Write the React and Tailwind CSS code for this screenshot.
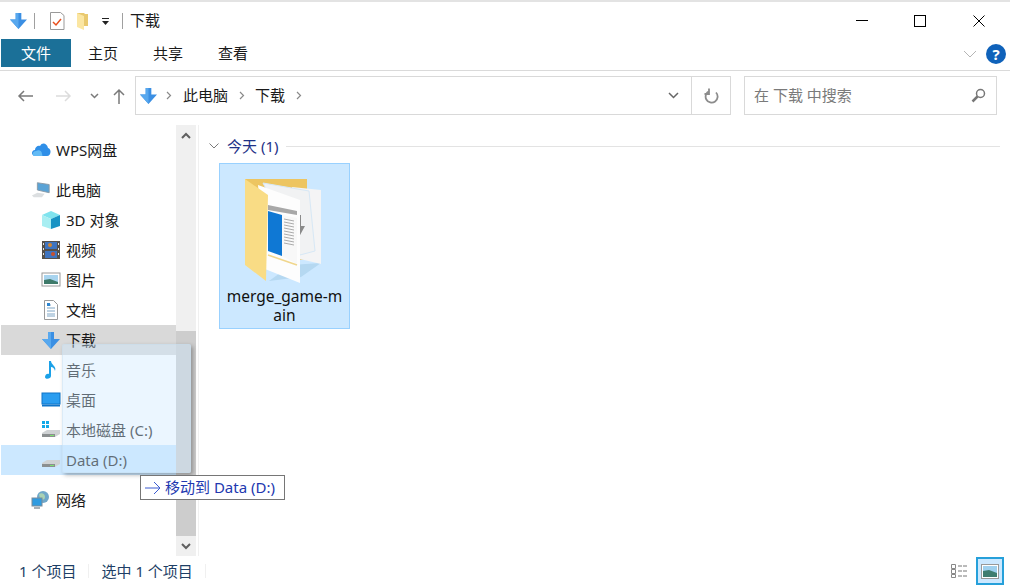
import React from 'react';

const font = "font-['Segoe_UI','Noto_Sans','Noto_Sans_CJK_SC',sans-serif]";

const DownArrow = ({ size = 18 }) => (
  <svg width={size} height={size} viewBox="0 0 18 18">
    <path d="M6 1h6v7h6l-9 10-9-10h6z" fill="#3b8fe3" />
    <path d="M6 1h3v17L0 8h6z" fill="#58a8ee" />
  </svg>
);

const TinyFolder = () => (
  <svg width="13" height="18" viewBox="0 0 13 18">
    <path d="M1 1h7l1 1h3v12H1z" fill="#e9c96f" />
    <path d="M1 1l7 3v14l-7-3z" fill="#fbe6a2" />
  </svg>
);

const Cloud = () => (
  <svg width="20" height="16" viewBox="0 0 20 16">
    <path d="M4 14c-4 0-4-6 0-6 0-3 3-5 5-4 2-4 7-3 8 2 4 1 3 8-1 8z" fill="#2f8fe8" />
    <path d="M3 14c-2-2-1-5 2-5 3-2 6 0 6 3 1 2 0 2 0 2z" fill="#63bbf5" />
  </svg>
);

const Computer = () => (
  <svg width="22" height="18" viewBox="0 0 22 18">
    <path d="M7 1l13 2v9L7 9z" fill="#5aa3d6" stroke="#8a98a4" />
    <path d="M1 15l6-3 8 1-3 4H3z" fill="#dcdfe1" />
  </svg>
);

const Cube = () => (
  <svg width="20" height="20" viewBox="0 0 20 20">
    <path d="M10 1l9 4-9 4-9-4z" fill="#7fe3ee" />
    <path d="M1 5l9 4v10l-9-3z" fill="#a8eef2" />
    <path d="M19 5l-9 4v10l9-3z" fill="#1793c4" />
  </svg>
);

const Film = () => (
  <svg width="20" height="20" viewBox="0 0 20 20">
    <rect x="1" y="1" width="18" height="18" fill="#55504a" />
    <rect x="4" y="2" width="12" height="7" fill="#3f74bf" />
    <rect x="4" y="11" width="12" height="7" fill="#3f74bf" />
    <circle cx="9" cy="5" r="2" fill="#d5862f" />
    <circle cx="12" cy="14" r="2" fill="#c8502e" />
    <path d="M2 3h1v2H2zM2 8h1v2H2zM2 13h1v2H2zM17 3h1v2h-1zM17 8h1v2h-1zM17 13h1v2h-1z" fill="#e4e4e4" />
  </svg>
);

const Picture = () => (
  <svg width="20" height="16" viewBox="0 0 20 16">
    <rect x="1" y="1" width="18" height="13" fill="#fff" stroke="#9a9a9a" />
    <rect x="3" y="3" width="14" height="9" fill="#a8d4ef" />
    <path d="M3 8l6-1 8 3v2H3z" fill="#3e7a6a" />
  </svg>
);

const Doc = () => (
  <svg width="16" height="20" viewBox="0 0 16 20">
    <path d="M1.500 .5h9l4 4v15h-13z" fill="#fff" stroke="#9a9a9a" />
    <path d="M4 5h4M4 8h8M4 11h8M4 14h8M4 16h8" stroke="#7ea6c6" />
    <path d="M4 3h3v3H4z" fill="#2e86d0" />
  </svg>
);

const Note = () => (
  <svg width="14" height="20" viewBox="0 0 14 20">
    <path d="M5 1h2c0 4 6 5 4 10-1-3-2-4-4-4v9c0 3-6 4-6 1s3-4 4-3z" fill="#1ba1e8" />
  </svg>
);

const Desktop = () => (
  <svg width="20" height="16" viewBox="0 0 20 16">
    <rect x="1" y="1" width="18" height="11" fill="#2a9df0" stroke="#0f74c8" />
    <path d="M1 13.500h18" stroke="#0f74c8" strokeWidth="2" />
  </svg>
);

const Drive = ({ windows }) => (
  <svg width="20" height="20" viewBox="0 0 20 20">
    {windows && <path d="M1 1h3v3H1zM5 1h3v3H5zM1 5h3v3H1zM5 5h3v3H5z" fill="#12a9e8" />}
    <path d="M1 13l5-3h13v4l-5 3H1z" fill="#cfd2d4" />
    <path d="M1 14h13v3H1z" fill="#8b8f90" />
    <rect x="9" y="15" width="4" height="1" fill="#7de070" />
  </svg>
);

const Network = () => (
  <svg width="20" height="20" viewBox="0 0 20 20">
    <circle cx="12" cy="7" r="6" fill="#6fa7c9" />
    <path d="M8 4c3-2 6 0 6 3s-3 3-5 2z" fill="#a9d2b4" />
    <rect x="1" y="8" width="10" height="8" fill="#2f9be0" stroke="#7d8c99" />
    <path d="M3 18h6" stroke="#a8b0b6" strokeWidth="2" />
  </svg>
);

const NavRow = ({ icon, label, indent, bg }) => (
  <div className={`flex items-center h-[30px] ml-px ${bg || ''}`}>
    <div className={`flex justify-center items-center w-5 h-5 ${indent ? 'ml-[40px] mr-[5px]' : 'ml-[30px] mr-[5px]'}`}>{icon}</div>
    <span className="text-[15px] text-[#1a1a1a] whitespace-nowrap">{label}</span>
  </div>
);

const BigFolder = () => (
  <svg width="76" height="104" viewBox="0 0 76 104">
    <path d="M0 0h62v80L0 86z" fill="#edc561" />
    <path d="M24 102l32-4 20-14-30 2z" fill="#a5cde8" opacity=".6" />
    <path d="M47 8l29 3v74l-21-5z" fill="#f4f4f5" />
    <path d="M18 4l46 8 6 60-15 4z" fill="#f1f2f3" stroke="#d7e8f6" />
    <path d="M50 36h6v11h4l-6 11-5-11h2z" fill="#8a8a8a" />
    <path d="M13 6l42 15v83l-35-14z" fill="#fdfdfd" />
    <path d="M23 26l29 6v4l-29-5z" fill="#a8a8a8" />
    <path d="M23 32l14 4v41l-14-5z" fill="#0f78d4" />
    <path d="M37 36l15 3v46l-15-8z" fill="#f8f8f8" />
    <path d="M39 40l10 2M39 43l10 2M39 46l10 2M39 49l10 2M39 52l10 2M39 55l10 2M39 58l10 2M39 61l10 2M39 64l10 2" stroke="#8a8a8a" strokeWidth=".7" />
    <path d="M23 76l29 10" stroke="#f0d68c" strokeWidth="1.500" />
    <path d="M0 0l23 16-2 86L0 86z" fill="#f9dc85" />
  </svg>
);

const App = () => {
  return (
    <div className={`relative w-[1010px] h-[586px] overflow-hidden bg-white flex flex-col border-t-2 border-[#e3e3e3] ${font}`}>
      {/* title bar */}
      <div className="h-[37px] flex items-center shrink-0">
        <div className="ml-[10px]"><DownArrow size={17} /></div>
        <div className="w-px h-[16px] bg-[#a0a0a0] ml-[7px]" />
        <svg className="ml-[15px]" width="15" height="18" viewBox="0 0 15 18">
          <path d="M.5 .5h10l3.500 3v14H.5z" fill="#fff" stroke="#999" />
          <path d="M3 10l3 3 5-6" stroke="#e8501e" strokeWidth="1.500" fill="none" />
        </svg>
        <div className="ml-[11px]"><TinyFolder /></div>
        <svg className="ml-[13px] mt-[3px]" width="8" height="8" viewBox="0 0 8 8">
          <path d="M0 3h7l-3.500 4z" fill="#222" />
          <path d="M0 .5h7" stroke="#222" />
        </svg>
        <div className="w-px h-[16px] bg-[#a0a0a0] ml-[12px]" />
        <span className="ml-[7px] text-[15px] text-[#1a1a1a]">下载</span>
        <div className="ml-auto mr-px flex items-center">
          <div className="w-[58px] flex justify-center"><div className="w-3 h-px bg-black" /></div>
          <div className="w-[58px] flex justify-center"><div className="w-3 h-3 border border-black" /></div>
          <div className="w-[60px] flex justify-center">
            <svg width="12" height="12" viewBox="0 0 12 12"><path d="M.5 .5l11 11M11.500 .5l-11 11" stroke="#000" /></svg>
          </div>
        </div>
      </div>
      {/* ribbon tabs */}
      <div className="h-[32px] shrink-0 flex items-stretch border-b border-[#dadada] pl-px">
        <div className="w-[70px] h-[28px] bg-[#1b7098] text-white text-[15px] flex items-center justify-center">文件</div>
        <div className="w-[64px] flex items-center justify-center text-[15px] text-[#1a1a1a] h-[28px]">主页</div>
        <div className="w-[66px] flex items-center justify-center text-[15px] text-[#1a1a1a] h-[28px]">共享</div>
        <div className="w-[64px] flex items-center justify-center text-[15px] text-[#1a1a1a] h-[28px]">查看</div>
        <div className="ml-auto flex items-center mb-px mr-[4px]">
          <svg width="14" height="8" viewBox="0 0 14 8"><path d="M1 1l6 6 6-6" stroke="#b5b5b5" fill="none" /></svg>
          <div className="ml-[9px] w-5 h-5 rounded-full bg-[#0f62ba] text-white text-[15px] font-bold flex items-center justify-center leading-none">?</div>
        </div>
      </div>
      {/* address bar */}
      <div className="h-[49px] shrink-0 flex items-center">
        <svg className="ml-[17px]" width="16" height="12" viewBox="0 0 16 12"><path d="M16 6H2M7 1L2 6l5 5" stroke="#7a7a7a" strokeWidth="1.500" fill="none" /></svg>
        <svg className="ml-[23px]" width="16" height="12" viewBox="0 0 16 12"><path d="M0 6h14M9 1l5 5-5 5" stroke="#dcdcdc" strokeWidth="1.500" fill="none" /></svg>
        <svg className="ml-[18px]" width="9" height="6" viewBox="0 0 9 6"><path d="M1 1l3.500 3.500L8 1" stroke="#7a7a7a" strokeWidth="1.500" fill="none" /></svg>
        <svg className="ml-[14px]" width="12" height="16" viewBox="0 0 12 16"><path d="M6 16V2M1 7l5-5 5 5" stroke="#7a7a7a" strokeWidth="1.500" fill="none" /></svg>
        <div className="ml-[10px] w-[596px] h-[39px] border border-[#d9d9d9] flex items-center">
          <div className="ml-[4px]"><DownArrow size={17} /></div>
          <svg className="ml-[9px]" width="6" height="9" viewBox="0 0 6 9"><path d="M1 1l3.500 3.500L1 8" stroke="#8a8a8a" strokeWidth="1.200" fill="none" /></svg>
          <span className="ml-[11px] text-[15px] text-[#1a1a1a]">此电脑</span>
          <svg className="ml-[11px]" width="6" height="9" viewBox="0 0 6 9"><path d="M1 1l3.500 3.500L1 8" stroke="#8a8a8a" strokeWidth="1.200" fill="none" /></svg>
          <span className="ml-[10px] text-[15px] text-[#1a1a1a]">下载</span>
          <svg className="ml-[11px]" width="6" height="9" viewBox="0 0 6 9"><path d="M1 1l3.500 3.500L1 8" stroke="#8a8a8a" strokeWidth="1.200" fill="none" /></svg>
          <div className="ml-auto w-[36px] h-full flex items-center justify-center border-r border-[#d9d9d9]">
            <svg width="11" height="7" viewBox="0 0 11 7"><path d="M1 1l4.500 4.500L10 1" stroke="#666" strokeWidth="1.500" fill="none" /></svg>
          </div>
          <div className="w-[38px] flex items-center justify-center pl-px">
            <svg width="15" height="16" viewBox="0 0 15 16"><path d="M5.500 3a6 6 0 1 0 6.500 1.500M5 .5v5.500H.5" stroke="#8c8c8c" strokeWidth="1.800" fill="none" /></svg>
          </div>
        </div>
        <div className="ml-[13px] w-[253px] h-[39px] border border-[#d9d9d9] flex items-center justify-between pl-[9px] pr-[10px]">
          <span className="text-[15px] text-[#7a7a7a]">在 下载 中搜索</span>
          <svg width="15" height="15" viewBox="0 0 15 15"><circle cx="9.500" cy="5.500" r="4" stroke="#777" strokeWidth="1.500" fill="none" /><path d="M6.500 8.500L1.500 13.500" stroke="#777" strokeWidth="2.500" /></svg>
        </div>
      </div>
      {/* body */}
      <div className="flex-1 flex min-h-0 mt-[5px]">
        <div className="w-[176px] pt-[10px] shrink-0">
          <NavRow icon={<Cloud />} label="WPS网盘" />
          <div className="h-[10px]" />
          <NavRow icon={<Computer />} label="此电脑" />
          <NavRow icon={<Cube />} label="3D 对象" indent />
          <NavRow icon={<Film />} label="视频" indent />
          <NavRow icon={<Picture />} label="图片" indent />
          <NavRow icon={<Doc />} label="文档" indent />
          <NavRow icon={<DownArrow size={18} />} label="下载" indent bg="bg-[#d9d9d9]" />
          <NavRow icon={<Note />} label="音乐" indent />
          <NavRow icon={<Desktop />} label="桌面" indent />
          <NavRow icon={<Drive windows />} label="本地磁盘 (C:)" indent />
          <NavRow icon={<Drive />} label="Data (D:)" indent bg="bg-[#cce8ff]" />
          <div className="h-[10px]" />
          <NavRow icon={<Network />} label="网络" />
        </div>
        {/* sidebar scrollbar */}
        <div className="w-[20px] shrink-0 bg-[#f0f0f0] flex flex-col">
          <div className="h-[20px] flex items-center justify-center">
            <svg width="10" height="7" viewBox="0 0 10 7"><path d="M1 6l4-4 4 4" stroke="#606060" strokeWidth="2" fill="none" /></svg>
          </div>
          <div className="h-[186px]" />
          <div className="flex-1 bg-[#cdcdcd]" />
          <div className="h-[20px] flex items-center justify-center">
            <svg width="10" height="7" viewBox="0 0 10 7"><path d="M1 1l4 4 4-4" stroke="#606060" strokeWidth="2" fill="none" /></svg>
          </div>
        </div>
        <div className="w-px bg-[#f0f0f0] ml-[2px] shrink-0" />
        {/* file pane */}
        <div className="flex-1 pl-[10px] pr-[10px] pt-[9px]">
          <div className="flex items-center h-[24px]">
            <svg width="10" height="6" viewBox="0 0 10 6"><path d="M.5 .5L5 5 9.500 .5" stroke="#7a7a7a" fill="none" /></svg>
            <span className="ml-[8px] text-[15px] text-[#1e3287]">今天 (1)</span>
            <div className="ml-[8px] flex-1 h-px bg-[#e3e3e3]" />
          </div>
          <div className="mt-[5px] ml-[10px] w-[131px] h-[166px] bg-[#cce8ff] border border-[#99d1ff] flex flex-col items-center">
            <div className="mt-[15px] -ml-[3px] h-[104px]"><BigFolder /></div>
            <div className="mt-[4px] text-[15.500px] leading-[19px] text-[#111] text-center w-[118px] break-all">merge_game-main</div>
          </div>
        </div>
      </div>
      {/* status bar */}
      <div className="h-[30px] shrink-0 flex items-center text-[15px] text-[#1e3f66]">
        <span className="ml-[19px]">1 个项目</span>
        <div className="w-px h-[14px] bg-[#f0f0f0] ml-[12px]" />
        <span className="ml-[12px]">选中 1 个项目</span>
        <div className="w-px h-[14px] bg-[#f0f0f0] ml-[12px]" />
        <div className="ml-auto flex items-center mr-[6px]">
          <svg width="20" height="16" viewBox="0 0 20 16">
            <path d="M1.500 1.500h4v4h-4zM1.500 6.500h4v4h-4zM1.500 11.500h4v3h-4z" fill="#fff" stroke="#888" />
            <path d="M8 3h4M13 3h4M8 8h4M13 8h4M8 13h4M13 13h4" stroke="#777" />
          </svg>
          <div className="ml-[6px] w-[28px] h-[28px] bg-[#cce8ff] border-2 border-[#26a0da] flex items-center justify-center">
            <svg width="18" height="15" viewBox="0 0 18 15">
              <rect x=".5" y=".5" width="17" height="14" fill="#fff" stroke="#999" />
              <rect x="2" y="2" width="14" height="11" fill="#9fd0ee" />
              <path d="M2 7l6-1 8 3v4H2z" fill="#3f7d70" />
            </svg>
          </div>
        </div>
      </div>
      {/* drag ghost */}
      <div className="absolute left-[62px] top-[342px] w-[129px] h-[129px] bg-[#cce8ff]/40 rounded-[2px] border border-[#c3dceb]/40 shadow-[2px_2px_4px_rgba(0,0,0,0.3)] pointer-events-none" />
      <div className="absolute left-[140px] top-[473px] w-[145px] h-[25px] bg-white border border-[#767676] flex items-center pl-[4px] text-[15px] text-[#2238b0] whitespace-nowrap">
        <svg width="16" height="14" viewBox="0 0 16 14"><path d="M0 7h15M9 1l6 6-6 6" stroke="#3a5bd0" fill="none" /></svg>
        <span className="ml-[4px]">移动到 Data (D:)</span>
      </div>
    </div>
  );
};

export default App;
